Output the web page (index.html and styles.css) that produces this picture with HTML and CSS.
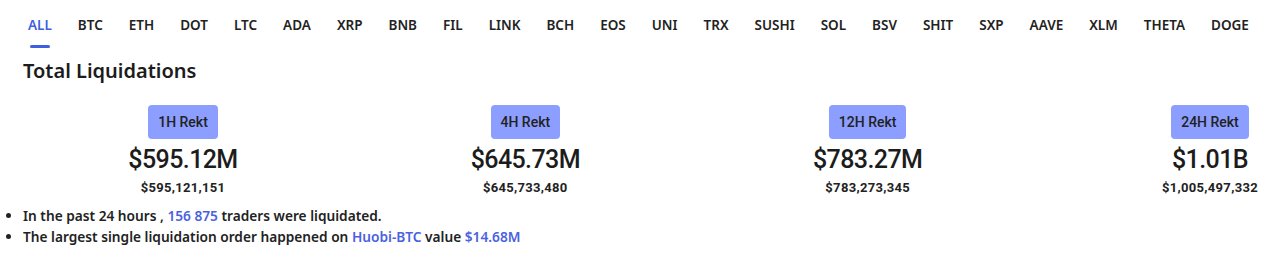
FILE: index.html
```html
<!DOCTYPE html>
<html>
<head>
<meta charset="utf-8">
<link rel="stylesheet" href="styles.css">
</head>
<body>
<nav class="tabs">
  <span class="tab active">ALL</span>
  <span class="tab">BTC</span>
  <span class="tab">ETH</span>
  <span class="tab">DOT</span>
  <span class="tab">LTC</span>
  <span class="tab">ADA</span>
  <span class="tab">XRP</span>
  <span class="tab">BNB</span>
  <span class="tab">FIL</span>
  <span class="tab">LINK</span>
  <span class="tab">BCH</span>
  <span class="tab">EOS</span>
  <span class="tab">UNI</span>
  <span class="tab">TRX</span>
  <span class="tab">SUSHI</span>
  <span class="tab">SOL</span>
  <span class="tab">BSV</span>
  <span class="tab">SHIT</span>
  <span class="tab">SXP</span>
  <span class="tab">AAVE</span>
  <span class="tab">XLM</span>
  <span class="tab">THETA</span>
  <span class="tab">DOGE</span>
</nav>
<h2 class="title">Total Liquidations</h2>
<div class="cards">
  <div class="card">
    <div class="badge">1H Rekt</div>
    <div class="big">$595.12M</div>
    <div class="small">$595,121,151</div>
  </div>
  <div class="card">
    <div class="badge">4H Rekt</div>
    <div class="big">$645.73M</div>
    <div class="small">$645,733,480</div>
  </div>
  <div class="card">
    <div class="badge">12H Rekt</div>
    <div class="big">$783.27M</div>
    <div class="small">$783,273,345</div>
  </div>
  <div class="card">
    <div class="badge">24H Rekt</div>
    <div class="big">$1.01B</div>
    <div class="small">$1,005,497,332</div>
  </div>
</div>
<ul class="notes">
  <li>In the past 24 hours , <span class="hl">156 875</span> traders were liquidated.</li>
  <li>The largest single liquidation order happened on <span class="hl">Huobi-BTC</span> value <span class="hl">$14.68M</span></li>
</ul>
</body>
</html>
```

FILE: styles.css
```css
html, body {
  margin: 0;
  padding: 0;
  background: #fff;
}
body {
  width: 1271px;
  height: 255px;
  overflow: hidden;
  font-family: "Noto Sans", "Liberation Sans", sans-serif;
  color: #222;
}
.tabs {
  display: flex;
  padding: 15px 0 0 15px;
  height: 33px;
}
.tab {
  position: relative;
  padding: 0 13px;
  font-size: 13.5px;
  font-weight: 600;
  line-height: 20px;
  color: #222;
}
.tab.active {
  color: #3d5fe0;
}
.tab.active::after {
  content: "";
  position: absolute;
  left: 15px;
  right: 15px;
  top: 30px;
  height: 3px;
  border-radius: 2px;
  background: #3d5fe0;
}
.title {
  margin: 10px 0 0 23px;
  font-size: 20px;
  font-weight: 600;
  line-height: 26px;
  color: #1c1c1c;
}
.cards {
  display: flex;
  justify-content: space-between;
  width: 1147px;
  margin: 21px 0 0 123px;
}
.card {
  width: 120px;
  display: flex;
  flex-direction: column;
  align-items: center;
}
.badge {
  background: #8c9eff;
  border-radius: 4px;
  padding: 0 10px;
  height: 34px;
  line-height: 34px;
  font-family: Roboto, "Liberation Sans", sans-serif;
  font-weight: 500;
  font-size: 14px;
  color: #222;
}
.big {
  margin-top: 6px;
  font-family: Roboto, "Liberation Sans", sans-serif;
  font-weight: 500;
  font-size: 25px;
  letter-spacing: -0.6px;
  line-height: 30px;
  color: #1c1c1c;
}
.small {
  margin-top: 5px;
  font-family: Roboto, "Liberation Sans", sans-serif;
  font-weight: 700;
  font-size: 13px;
  letter-spacing: 0.3px;
  line-height: 16px;
  color: #222;
}
.notes {
  margin: 9px 0 0 0;
  padding: 0 0 0 23px;
  font-size: 13.7px;
  font-weight: 600;
  line-height: 21px;
}
.hl {
  color: #4a62e0;
}
```
